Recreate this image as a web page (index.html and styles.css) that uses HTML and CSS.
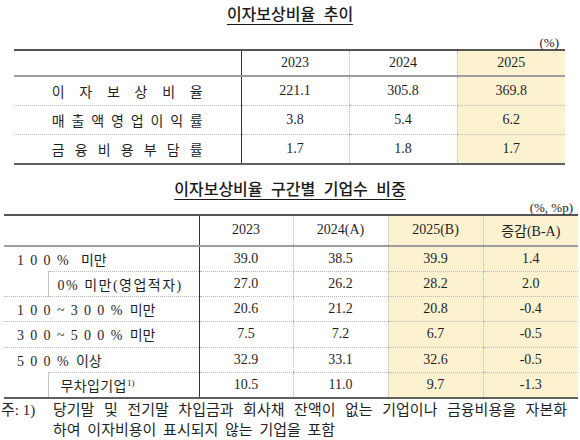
FILE: index.html
```html
<!DOCTYPE html>
<html lang="ko">
<head>
<meta charset="utf-8">
<title>이자보상비율</title>
<link rel="stylesheet" href="styles.css">
</head>
<body>
<div class="page">
  <h1 class="title t1"><span>이자보상비율 추이</span></h1>
  <div class="unit u1">(%)</div>
  <table class="tbl tbl1">
    <colgroup><col class="w227"><col class="w108"><col class="w108"><col class="w108"></colgroup>
    <thead>
      <tr><th class="lab"></th><th>2023</th><th>2024</th><th class="hl">2025</th></tr>
    </thead>
    <tbody>
      <tr><td class="lab"><span class="dist">이 자 보 상 비 율</span></td><td>221.1</td><td>305.8</td><td class="hl">369.8</td></tr>
      <tr><td class="lab"><span class="dist">매 출 액 영 업 이 익 률</span></td><td>3.8</td><td>5.4</td><td class="hl">6.2</td></tr>
      <tr><td class="lab"><span class="dist">금 융 비 용 부 담 률</span></td><td>1.7</td><td>1.8</td><td class="hl">1.7</td></tr>
    </tbody>
  </table>

  <h2 class="title t2"><span>이자보상비율 구간별 기업수 비중</span></h2>
  <div class="unit u2">(%, %p)</div>
  <table class="tbl tbl2">
    <colgroup><col class="w44"><col class="w151"><col class="w94"><col class="w95"><col class="w95"><col class="w95"></colgroup>
    <thead>
      <tr><th class="lab" colspan="2"></th><th>2023</th><th>2024(A)</th><th class="hl">2025(B)</th><th class="hl">증감(B-A)</th></tr>
    </thead>
    <tbody>
      <tr><td class="lab left" colspan="2"><span class="ls">100%</span><span class="k g2">미만</span></td><td>39.0</td><td>38.5</td><td class="hl">39.9</td><td class="hl">1.4</td></tr>
      <tr class="sub"><td class="gap"></td><td class="lab sublab">0% 미만(영업적자)</td><td>27.0</td><td>26.2</td><td class="hl">28.2</td><td class="hl">2.0</td></tr>
      <tr><td class="lab left" colspan="2"><span class="ls">100~300%</span><span class="k g1">미만</span></td><td>20.6</td><td>21.2</td><td class="hl">20.8</td><td class="hl">-0.4</td></tr>
      <tr><td class="lab left" colspan="2"><span class="ls">300~500%</span><span class="k g1">미만</span></td><td>7.5</td><td>7.2</td><td class="hl">6.7</td><td class="hl">-0.5</td></tr>
      <tr><td class="lab left" colspan="2"><span class="ls">500%</span><span class="k g0">이상</span></td><td>32.9</td><td>33.1</td><td class="hl">32.6</td><td class="hl">-0.5</td></tr>
      <tr class="sub"><td class="gap"></td><td class="lab sublab2">무차입기업<sup>1)</sup></td><td>10.5</td><td>11.0</td><td class="hl">9.7</td><td class="hl">-1.3</td></tr>
    </tbody>
  </table>

  <div class="note">
    <div class="note-label">주: 1)</div>
    <div class="note-body">
      <div class="note-l1">당기말 및 전기말 차입금과 회사채 잔액이 없는 기업이나 금융비용을 자본화</div>
      <div class="note-l2">하여 이자비용이 표시되지 않는 기업을 포함</div>
    </div>
  </div>
</div>
</body>
</html>
```

FILE: styles.css
```css
* { box-sizing: border-box; }
html, body { margin: 0; padding: 0; background: #fff; }
body {
  width: 580px;
  height: 440px;
  overflow: hidden;
  font-family: "Liberation Serif", "Noto Sans CJK KR", serif;
  color: #1f1f1f;
}
.page { width: 580px; }

.title {
  margin: 0;
  font-family: "Noto Sans CJK KR", sans-serif;
  font-size: 16px;
  font-weight: 500;
  line-height: 20px;
  text-align: center;
  word-spacing: 4px;
  color: #1a1a1a;
}
.title span {
  text-decoration: underline;
  text-decoration-thickness: 1px;
  text-underline-offset: 4px;
}
.t1 { padding-top: 3px; }
.t2 { margin-top: 13px; }

.unit {
  font-size: 13px;
  line-height: 13px;
  height: 13px;
  text-align: right;
  color: #222;
}
.u1 { margin-top: 13px; width: 565px; padding-right: 6px; }
.u2 { margin-top: 3px; width: 578px; padding-right: 5px; }

.tbl {
  border-collapse: collapse;
  table-layout: fixed;
}
.tbl1 { margin-left: 14px; width: 551px; }
.tbl2 { margin-left: 4px; width: 574px; }

.w227 { width: 227px; }
.w108 { width: 108px; }
.w44 { width: 44px; }
.w151 { width: 151px; }
.w94 { width: 94px; }
.w95 { width: 95px; }

.tbl th, .tbl td {
  padding: 0;
  text-align: center;
  vertical-align: middle;
  font-weight: normal;
  font-size: 14px;
  white-space: nowrap;
  border-left: 1px dotted #b9b9b9;
  border-bottom: 1px dotted #b9b9b9;
}
.tbl thead th {
  border-top: 2px solid #555;
  border-bottom: 2px solid #9d9d9d;
}
.tbl tbody tr:last-child td { border-bottom: 2px solid #5f5f5f; }
.tbl .lab { border-left: none; border-right: 1px solid #333; }

.tbl1 thead tr { height: 26px; }
.tbl1 tbody tr { height: 29.3px; }
.tbl2 thead tr { height: 31px; }
.tbl2 tbody tr { height: 25.3px; }

.hl { background: #fdf2cf; }

.dist {
  display: inline-block;
  width: 151px;
  text-align: justify;
  text-align-last: justify;
  font-size: 14px;
  vertical-align: middle;
}

.tbl td.left { text-align: left; padding-left: 13px; }
.ls { letter-spacing: 6.3px; }
.k { letter-spacing: 0; }
.g0 { margin-left: 1px; }
.g1 { margin-left: 1px; }
.g2 { margin-left: 6px; }

.tbl td.gap {
  border-top: hidden;
  border-left: none;
  border-right: 1px solid #c4c4c4;
}
.tbl td.sublab {
  text-align: left;
  padding-left: 9px;
  letter-spacing: 1.5px;
  border-left: 1px solid #c4c4c4;
}
.tbl td.sublab2 {
  text-align: left;
  padding-left: 12px;
  letter-spacing: 0.4px;
  border-left: 1px solid #c4c4c4;
}
sup { font-size: 9px; line-height: 0; vertical-align: 5px; letter-spacing: 0; }

.note {
  display: flex;
  margin-top: 1px;
  font-size: 15px;
  line-height: 20px;
  color: #1f1f1f;
}
.note-label { width: 53px; padding-left: 1px; white-space: nowrap; }
.note-body { width: 514px; }
.note-l1 { text-align: justify; text-align-last: justify; }
.note-l2 { word-spacing: 3px; }
```
